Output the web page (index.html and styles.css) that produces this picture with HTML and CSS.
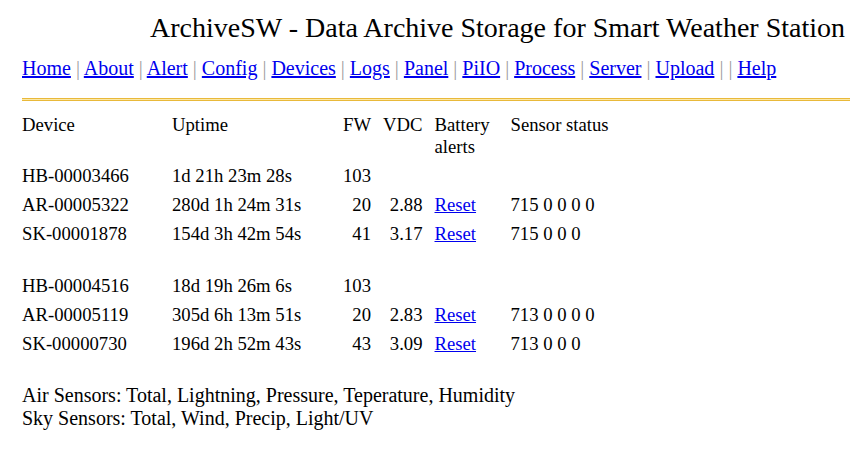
FILE: index.html
```html
<!DOCTYPE html>
<html lang="en">
<head>
    <meta charset="UTF-8">
    <title>ArchiveSW</title>
    <link rel="stylesheet" href="styles.css">
</head>
<body>
    <h1 class="title">ArchiveSW - Data Archive Storage for Smart Weather Station</h1>

    <div class="nav">
        <a href="#">Home</a> <span class="sep">|</span>
        <a href="#">About</a> <span class="sep">|</span>
        <a href="#">Alert</a> <span class="sep">|</span>
        <a href="#">Config</a> <span class="sep">|</span>
        <a href="#">Devices</a> <span class="sep">|</span>
        <a href="#">Logs</a> <span class="sep">|</span>
        <a href="#">Panel</a> <span class="sep">|</span>
        <a href="#">PiIO</a> <span class="sep">|</span>
        <a href="#">Process</a> <span class="sep">|</span>
        <a href="#">Server</a> <span class="sep">|</span>
        <a href="#">Upload</a> <span class="sep">|</span> <span class="sep">|</span>
        <a href="#">Help</a>
    </div>

    <hr class="rule">

    <table class="devices">
        <colgroup>
            <col class="c-dev">
            <col class="c-up">
            <col class="c-fw">
            <col class="c-vdc">
            <col class="c-bat">
            <col class="c-sens">
        </colgroup>
        <thead>
            <tr>
                <th>Device</th>
                <th>Uptime</th>
                <th class="num">FW</th>
                <th class="num">VDC</th>
                <th>Battery<br>alerts</th>
                <th>Sensor status</th>
            </tr>
        </thead>
        <tbody>
            <tr>
                <td>HB-00003466</td>
                <td>1d 21h 23m 28s</td>
                <td class="num">103</td>
                <td class="num"></td>
                <td></td>
                <td></td>
            </tr>
            <tr>
                <td>AR-00005322</td>
                <td>280d 1h 24m 31s</td>
                <td class="num">20</td>
                <td class="num">2.88</td>
                <td><a href="#">Reset</a></td>
                <td>715 0 0 0 0</td>
            </tr>
            <tr>
                <td>SK-00001878</td>
                <td>154d 3h 42m 54s</td>
                <td class="num">41</td>
                <td class="num">3.17</td>
                <td><a href="#">Reset</a></td>
                <td>715 0 0 0</td>
            </tr>
            <tr class="gap"><td colspan="6"></td></tr>
            <tr>
                <td>HB-00004516</td>
                <td>18d 19h 26m 6s</td>
                <td class="num">103</td>
                <td class="num"></td>
                <td></td>
                <td></td>
            </tr>
            <tr>
                <td>AR-00005119</td>
                <td>305d 6h 13m 51s</td>
                <td class="num">20</td>
                <td class="num">2.83</td>
                <td><a href="#">Reset</a></td>
                <td>713 0 0 0 0</td>
            </tr>
            <tr>
                <td>SK-00000730</td>
                <td>196d 2h 52m 43s</td>
                <td class="num">43</td>
                <td class="num">3.09</td>
                <td><a href="#">Reset</a></td>
                <td>713 0 0 0</td>
            </tr>
        </tbody>
    </table>

    <p class="legend">
        Air Sensors: Total, Lightning, Pressure, Teperature, Humidity<br>
        Sky Sensors: Total, Wind, Precip, Light/UV
    </p>
</body>
</html>
```

FILE: styles.css
```css
body {
    font-family: "Liberation Serif", "Times New Roman", serif;
    font-size: 18.7px;
    color: #000000;
    background-color: #ffffff;
    margin: 0;
    padding: 0 0 0 22px;
}

a {
    color: #0000ee;
}

.title {
    font-size: 28px;
    font-weight: normal;
    text-align: right;
    margin: 0;
    padding: 12px 5px 0 0;
    line-height: 32px;
}

.nav {
    font-size: 20px;
    margin-top: 12px;
    line-height: 24px;
}

.nav .sep {
    color: #a0a0a0;
}

.rule {
    height: 1px;
    margin: 18px 0 0 0;
    border: none;
    border-top: 1px solid #e9b93a;
    border-bottom: 1px solid #e9b93a;
    background-color: #fbe8a6;
}

.devices {
    border-collapse: collapse;
    table-layout: fixed;
    margin-top: 10px;
}

.devices th,
.devices td {
    font-weight: normal;
    text-align: left;
    vertical-align: top;
    padding: 3px 0 4px 0;
    line-height: 22px;
}

.devices .num {
    text-align: right;
    padding-right: 12px;
}

.c-dev { width: 150px; }
.c-up { width: 171px; }
.c-fw { width: 40px; }
.c-vdc { width: 51px; }
.c-bat { width: 76px; }
.c-sens { width: 140px; }

.devices .gap td {
    height: 23px;
    padding: 0;
}

.legend {
    font-size: 20px;
    margin: 25px 0 0 0;
    line-height: 23px;
}
```
